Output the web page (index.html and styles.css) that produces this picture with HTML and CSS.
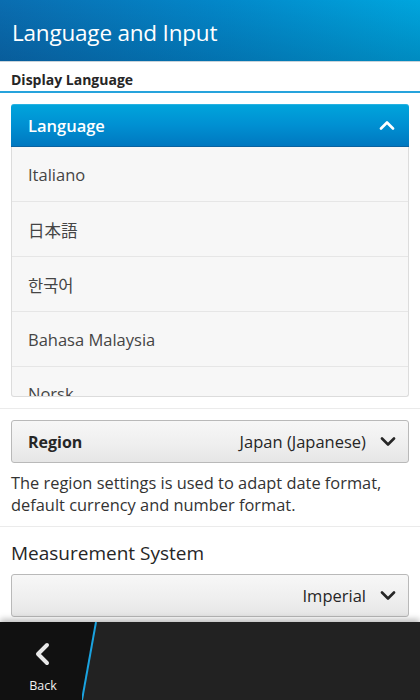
FILE: index.html
```html
<!DOCTYPE html>
<html lang="en">
<head>
<meta charset="utf-8">
<link rel="stylesheet" href="styles.css">
</head>
<body>
<div class="screen">
  <header class="titlebar">
    <h1 class="title">Language and Input</h1>
  </header>
  <main class="content">
    <div class="section-head">Display Language</div>
    <div class="pad">
      <div class="dropdown">
        <div class="dd-head">
          <span class="dd-label">Language</span>
          <svg class="chev" width="16" height="10" viewBox="0 0 16 10"><path d="M2 8.5 L8 2.5 L14 8.5" fill="none" stroke="#fff" stroke-width="2.6" stroke-linecap="round" stroke-linejoin="round"/></svg>
        </div>
        <ul class="dd-list">
          <li>Italiano</li>
          <li class="cjk">日本語</li>
          <li class="cjk">한국어</li>
          <li>Bahasa Malaysia</li>
          <li>Norsk</li>
        </ul>
      </div>
    </div>
    <div class="divider"></div>
    <div class="pad">
      <div class="select">
        <span class="sel-label">Region</span>
        <span class="sel-value">Japan (Japanese)</span>
        <svg class="chev" width="16" height="10" viewBox="0 0 16 10"><path d="M2 1.5 L8 7.5 L14 1.5" fill="none" stroke="#262626" stroke-width="2.6" stroke-linecap="round" stroke-linejoin="round"/></svg>
      </div>
      <p class="desc">The region settings is used to adapt date format, default currency and number format.</p>
    </div>
    <div class="divider"></div>
    <div class="pad">
      <div class="sub-title">Measurement System</div>
      <div class="select">
        <span class="sel-value">Imperial</span>
        <svg class="chev" width="16" height="10" viewBox="0 0 16 10"><path d="M2 1.5 L8 7.5 L14 1.5" fill="none" stroke="#262626" stroke-width="2.6" stroke-linecap="round" stroke-linejoin="round"/></svg>
      </div>
    </div>
  </main>
  <footer class="actionbar">
    <div class="back">
      <svg class="back-icon" width="20" height="24" viewBox="0 0 20 24"><path d="M14 3 L5 12 L14 21" fill="none" stroke="#e8e8e8" stroke-width="4" stroke-linecap="round" stroke-linejoin="round"/></svg>
      <span class="back-label">Back</span>
    </div>
    <svg class="slash" width="16" height="78" viewBox="0 0 16 78"><path d="M0 0 H14 L0 78 Z" fill="#111"/><path d="M14 0 L0 78" stroke="#1aa3e0" stroke-width="2"/></svg>
    <div class="rest"></div>
  </footer>
</div>
</body>
</html>
```
FILE: styles.css
```css
* { box-sizing: border-box; }
html, body { margin: 0; padding: 0; }
body {
  font-family: "Open Sans", "Noto Sans", "Noto Sans CJK JP", sans-serif;
  background: #fff;
  color: #262626;
}
.screen {
  width: 420px;
  height: 700px;
  display: flex;
  flex-direction: column;
  overflow: hidden;
}
.titlebar {
  height: 62px;
  flex: none;
  background:
    linear-gradient(to bottom, rgba(0,20,60,0) 0%, rgba(0,20,60,0.18) 100%),
    linear-gradient(to right, #0a6db0 0%, #0386c8 50%, #00a6de 100%);
  border-bottom: 1px solid #c9d3da;
  display: flex;
  align-items: center;
  padding: 3px 12px 0;
}
.title {
  margin: 0;
  font-weight: 400;
  font-size: 22.5px;
  color: #fff;
  letter-spacing: -0.2px;
}
.content {
  flex: 1;
  overflow: hidden;
  position: relative;
  z-index: 1;
}
.section-head {
  height: 31px;
  padding: 9px 11px 0;
  font-size: 14px;
  font-weight: 700;
  color: #262626;
  border-bottom: 2px solid #26a3dc;
  line-height: 18px;
}
.pad { padding: 0 11px; }
.dropdown {
  margin-top: 11px;
  margin-bottom: 11px;
}
.dd-head {
  height: 43px;
  border-radius: 3px 3px 0 0;
  background: linear-gradient(to bottom, #00a5dc 0%, #0090d2 50%, #0078c0 100%);
  border-bottom: 1px solid #0a62a0;
  box-shadow: inset 0 1px 0 rgba(255,255,255,0.15);
  display: flex;
  align-items: center;
  justify-content: space-between;
  padding: 0 14px 0 17px;
}
.dd-label {
  color: #fff;
  font-size: 16.5px;
  font-weight: 600;
}
.dd-list {
  list-style: none;
  margin: 0;
  padding: 0;
  height: 250px;
  overflow: hidden;
  background: #f7f7f7;
  border: 1px solid #dcdcdc;
  border-top: none;
  border-radius: 0 0 3px 3px;
}
.dd-list li {
  height: 55px;
  display: flex;
  align-items: center;
  padding: 1px 16px 0;
  font-size: 16.5px;
  color: #454545;
  border-bottom: 1px solid #e6e6e6;
}
.dd-list li.cjk {
  font-family: "Noto Sans CJK JP", "Noto Sans CJK KR", sans-serif;
  font-size: 16.5px;
}
.dd-list li:last-child { align-items: flex-start; padding-top: 15px; }
.divider {
  height: 1px;
  background: #ebebeb;
}
.select {
  height: 43px;
  margin-top: 11px;
  border: 1px solid #b9b9b9;
  border-radius: 3px;
  background: linear-gradient(to bottom, #f7f7f7 0%, #eeeeee 60%, #e6e6e6 100%);
  display: flex;
  align-items: center;
  padding: 0 12px 0 16px;
  gap: 14px;
}
.sel-label {
  font-weight: 700;
  font-size: 16px;
  color: #262626;
}
.sel-value {
  margin-left: auto;
  font-size: 16.5px;
  color: #262626;
}
.chev { flex: none; }
.desc {
  margin: 9px 0 10px;
  font-size: 16.4px;
  line-height: 22px;
  color: #333;
}
.sub-title {
  margin-top: 14px;
  font-size: 19px;
  line-height: 24px;
  color: #262626;
  margin-bottom: -2px;
}
.actionbar {
  height: 78px;
  flex: none;
  display: flex;
  background: #222;
  position: relative;
  z-index: 2;
  box-shadow: 0 -3px 6px rgba(0,0,0,0.25);
}
.back {
  width: 82px;
  background: #111;
  display: flex;
  flex-direction: column;
  align-items: center;
  padding-top: 20px;
  padding-left: 4px;
  gap: 13px;
}
.back-label {
  color: #f0f0f0;
  font-size: 12.5px;
  line-height: 14px;
}
.slash { flex: none; display: block; }
.rest { flex: 1; background: #222; }
```
